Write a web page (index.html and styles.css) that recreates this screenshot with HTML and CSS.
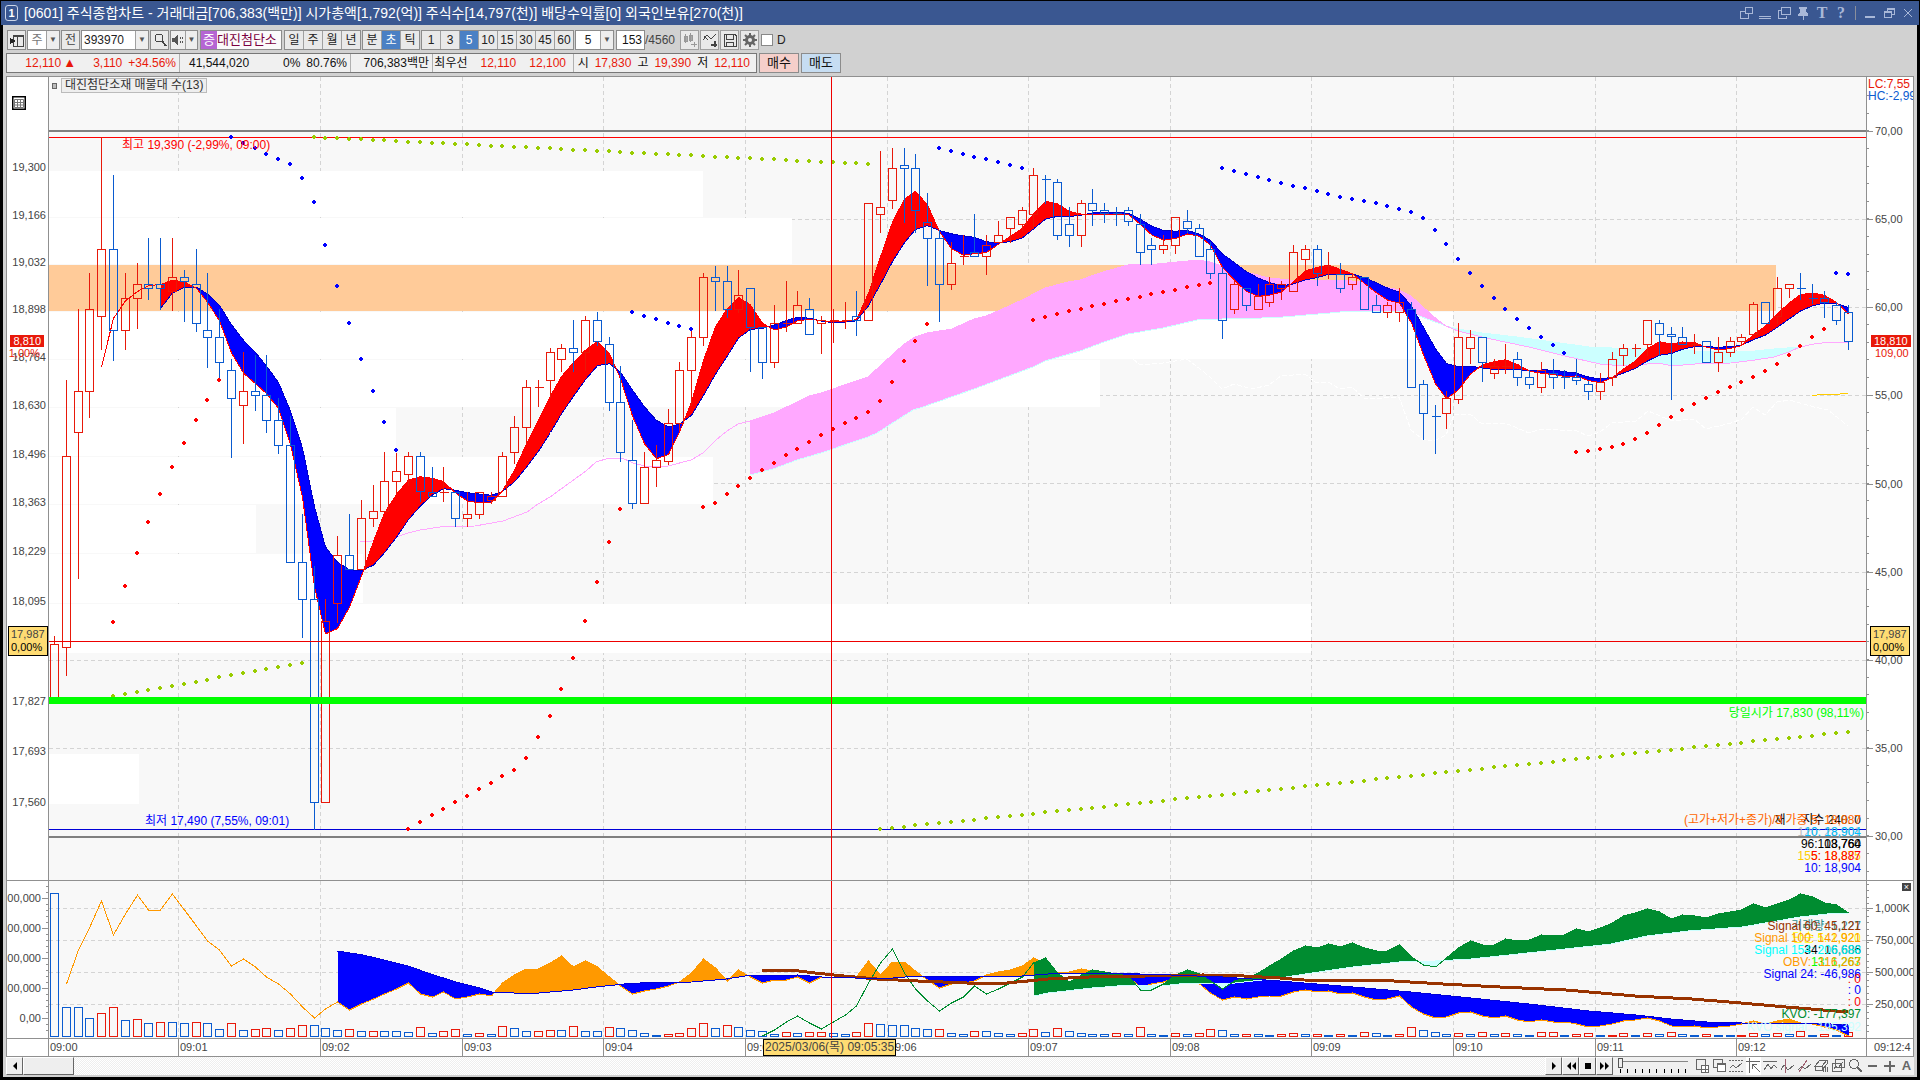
FILE: index.html
```html
<!DOCTYPE html>
<html lang="ko">
<head>
<meta charset="utf-8">
<title>[0601] 주식종합차트</title>
<link rel="stylesheet" href="styles.css">
</head>
<body>
<div class="window">
  <header class="titlebar">
    <span class="win-no">1</span>
    <h1 class="title">[0601] 주식종합차트 - 거래대금[706,383(백만)] 시가총액[1,792(억)] 주식수[14,797(천)] 배당수익률[0] 외국인보유[270(천)]</h1>
    <div class="win-tools">
      <button type="button" aria-label="창 연결"><svg width="14" height="14"><path d="M6 1.500h7v6H6zM6 5.500H1.500v7h8V8" /></svg></button>
      <button type="button" aria-label="접기"><svg width="14" height="14"><path d="M1 10.500h12M1 12.500h12"/></svg></button>
      <button type="button" aria-label="복제"><svg width="14" height="14"><path d="M4.500 1.500h9v7h-9zM4 4.500H1.500v8h8V10"/></svg></button>
      <button type="button" aria-label="고정"><svg width="14" height="14"><path d="M3 1h8v2h-1v3l2 2v2H2V8l2-2V3H3z" fill="currentColor" stroke="none"/><path d="M7 10v4"/></svg></button>
      <button type="button" class="serif">T</button>
      <button type="button" class="serif">?</button>
      <span class="tool-sep"></span>
      <button type="button" aria-label="최소화"><svg width="14" height="14"><path d="M2 10.500h10" stroke-width="2"/></svg></button>
      <button type="button" aria-label="이전 크기"><svg width="14" height="14"><path d="M5 5V2.500h7v6h-2M2 5.500h7v6H2zM2 6.500h7M5 3.500h7"/></svg></button>
      <button type="button" aria-label="닫기"><svg width="14" height="14"><path d="M3 3l8 8M11 3l-8 8"/></svg></button>
    </div>
  </header>

  <div class="client">
    <div class="toolbar">
      <button type="button" class="btn" aria-label="목록 펼치기"><svg width="16" height="16"><path d="M4.500 3.500h10v11h-10zM8.500 3.500v11M4 4.500h10"/><path d="M1 6l6 3-6 3z" fill="#222" stroke="none"/></svg></button>
      <span class="combo w32"><button type="button" class="plain gray">주</button><button type="button" class="drop" aria-label="주기 선택">▼</button></span>
      <button type="button" class="btn">전</button>
      <span class="combo w68"><input type="text" value="393970" aria-label="종목코드"><button type="button" class="drop" aria-label="종목 목록">▼</button></span>
      <button type="button" class="btn" aria-label="종목 찾기"><svg width="16" height="16"><circle cx="7" cy="6" r="4"/><path d="M10 9l4 5" stroke-width="2"/></svg></button>
      <span class="combo w28"><button type="button" class="plain" aria-label="음성"><svg width="14" height="14"><path d="M1 5h2l4-4v12L3 9H1z" fill="#555" stroke="none"/><path d="M9.500 4v2M9.500 8v2M11.500 4v2M11.500 8v2"/></svg></button><button type="button" class="drop" aria-label="음성 설정">▼</button></span>
      <span class="stock"><b>증</b><span>대진첨단소</span></span>
      <div class="seg g2"><button type="button">일</button><button type="button">주</button><button type="button">월</button><button type="button">년</button></div>
      <div class="seg"><button type="button">분</button><button type="button" class="on">초</button><button type="button">틱</button></div>
      <div class="seg"><button type="button">1</button><button type="button">3</button><button type="button" class="on">5</button><button type="button">10</button><button type="button">15</button><button type="button">30</button><button type="button">45</button><button type="button">60</button></div>
      <span class="combo w38"><input type="text" value="5" aria-label="간격" class="mid"><button type="button" class="drop" aria-label="간격 선택">▼</button></span>
      <span class="count"><input type="text" value="153" aria-label="표시 개수">/4560</span>
      <div class="icons">
        <button type="button" class="btn" aria-label="봉 추가"><svg width="16" height="16" class="dim"><path d="M2 4h3v5H2zM7 3h3v5H7zM3.500 2v9M8.500 1v9" fill="#aaa"/><path d="M9 12.500h6M12.500 10v5"/></svg></button>
        <button type="button" class="btn" aria-label="지표 추가"><svg width="16" height="16"><path d="M1 8l4-5 4 4 5-5M2 4l4 4"/><path d="M9 12.500h6M12.500 9v6" stroke-width="2"/></svg></button>
        <button type="button" class="btn" aria-label="저장"><svg width="16" height="16"><path d="M2 2.500h11l1 1v11H2zM4.500 3v4h7V3M4.500 14v-4h7v4"/></svg></button>
        <button type="button" class="btn" aria-label="설정"><svg width="16" height="16" class="gear"><circle cx="8" cy="8" r="3.500" stroke-width="3"/><path d="M8 1v3M8 12v3M1 8h3M12 8h3M3 3l2 2M11 11l2 2M13 3l-2 2M5 11l-2 2" stroke-width="2"/></svg></button>
      </div>
      <label class="check"><input type="checkbox">D</label>
    </div>

    <div class="quote-row">
      <div class="quote">
        <span class="cell c1 up"><span>12,110</span><span class="arrow">▲</span><span>3,110</span><span>+34.56%</span></span>
        <span class="cell c2"><span>41,544,020</span><span class="push">0%</span><span>80.76%</span></span>
        <span class="cell c3">706,383백만</span>
        <span class="cell c4"><span>최우선</span><span class="up">12,110</span><span class="up">12,100</span></span>
        <span class="cell c5"><span>시</span><span class="up">17,830</span><span>고</span><span class="up">19,390</span><span>저</span><span class="up">12,110</span></span>
      </div>
      <button type="button" class="order buy">매수</button>
      <button type="button" class="order sell">매도</button>
    </div>

    <main class="chart">
      <div class="axis axis-left" id="axisL1">
        <svg class="grid-icon" width="14" height="14" viewBox="0 0 14 14"><path d="M.5.500h13v13H.5z" fill="#fff" stroke="#000" stroke-width="2"/><path d="M2.500 3.500h9v8h-9zM2 6.500h10M2 9h10M5.500 3v9M8.500 3v9" fill="none" stroke="#777"/></svg>
      </div>
      <div class="plot" id="plot1">
        <svg id="price" viewBox="49 77 1817 803" preserveAspectRatio="none"></svg>
        <div class="legend"><i></i><span>대진첨단소재 매물대 수(13)</span></div>
      </div>
      <div class="axis axis-right" id="axisR1">
        <svg class="ticks" id="ticksR1" viewBox="1867 77 46 803" preserveAspectRatio="none"></svg>
        <div class="lchc"><span class="up">LC:7,55</span><span class="down">HC:-2,99</span></div>
      </div>

      <div class="axis axis-left sub" id="axisL2">
        <svg class="ticks" id="ticksL2" viewBox="7 881 41 157" preserveAspectRatio="none"></svg>
      </div>
      <div class="plot sub" id="plot2">
        <svg id="volume" viewBox="49 881 1817 157" preserveAspectRatio="none"></svg>
      </div>
      <div class="axis axis-right sub" id="axisR2">
        <svg class="ticks" id="ticksR2" viewBox="1867 881 46 157" preserveAspectRatio="none"></svg>
        <button type="button" class="pane-close" aria-label="지표 닫기">×</button>
      </div>

      <div class="axis time-corner"></div>
      <div class="time-axis" id="timeAxis"></div>
      <div class="axis time-end">09:12:4</div>
    </main>

    <footer class="bottom">
      <button type="button" class="raised" aria-label="왼쪽으로"><svg width="6" height="8"><path d="M5 0v8L1 4z" fill="#000" stroke="none"/></svg></button>
      <button type="button" class="raised thumb" aria-label="스크롤"></button>
      <span class="track"></span>
      <button type="button" class="raised" aria-label="재생"><svg width="8" height="8"><path d="M2 0l4 4-4 4z" fill="#000" stroke="none"/></svg></button>
      <button type="button" class="raised" aria-label="뒤로"><svg width="10" height="8"><path d="M5 0v8L1 4zM10 0v8L6 4z" fill="#000" stroke="none"/></svg></button>
      <button type="button" class="raised" aria-label="정지"><svg width="8" height="8"><path d="M1 1h6v6H1z" fill="#000" stroke="none"/></svg></button>
      <button type="button" class="raised" aria-label="앞으로"><svg width="10" height="8"><path d="M0 0v8l4-4zM5 0v8l4-4z" fill="#000" stroke="none"/></svg></button>
      <span class="speed"><input type="range" min="0" max="9" value="0" aria-label="재생 속도"><svg width="70" height="4"><path d="M2.500 0v4M9.500 0v4M17.500 0v4M24.500 0v4M31.500 0v4M38.500 0v4M46.500 0v4M53.500 0v4M60.500 0v4M67.500 0v4" stroke="#000"/></svg></span>
      <div class="draw-tools">
        <button type="button" aria-label="창 추가"><svg width="15" height="16"><path d="M1.500 1.500h9v10h-9z"/><path d="M6.500 7.500h7v7h-7zM10 7v8M6 11h8" fill="#fff"/></svg></button>
        <button type="button" aria-label="창 복사"><svg width="15" height="16"><path d="M1.500 1.500h9v8h-9z"/><path d="M5.500 5.500h8v8h-8zM5 6.500h9" fill="#fff"/></svg></button>
        <button type="button" aria-label="영역"><svg width="15" height="16"><path d="M0 2.500h14M0 13.500h14" stroke-dasharray="2 1"/><path d="M1 10l3-3 3 3 6-5"/></svg></button>
        <button type="button" class="on" aria-label="십자선"><svg width="15" height="16"><path d="M3.500 0v15M0 3.500h14M6 6l8 8M6.500 6v5M6 6.500h5"/></svg></button>
        <button type="button" aria-label="수평선"><svg width="15" height="16"><path d="M0 3.500h14M1 12l4-6 3 5 3-4 3 3"/></svg></button>
        <button type="button" aria-label="수직선"><svg width="15" height="16"><path d="M1 12l3-5 4 5 6-5"/><path d="M5.500 1v14" stroke="#a06070"/></svg></button>
        <button type="button" aria-label="추세선"><svg width="15" height="16"><path d="M1 12l4-4 3 3 6-5"/><path d="M2 14L10 2" stroke="#a06070"/></svg></button>
        <button type="button" aria-label="모두 지우기"><svg width="15" height="16"><path d="M1 8l5-6h7L8 8zM1 8v4h7V8M8 12l5-6V2"/><path d="M9 14v-3M11.500 14V9M13.500 14V9"/></svg></button>
        <button type="button" aria-label="차트 겹침"><svg width="15" height="16"><path d="M4.500 1.500h9v8h-9zM1.500 5.500h9v8h-9z"/><path d="M3 11l2-3 2 2 5-6"/></svg></button>
        <button type="button" aria-label="확대경"><svg width="15" height="16"><circle cx="6" cy="6" r="4.500"/><path d="M9 9l5 5" stroke-width="2"/></svg></button>
        <button type="button" aria-label="축소"><svg width="15" height="16"><path d="M3 8h9" stroke-width="2"/></svg></button>
        <button type="button" aria-label="확대"><svg width="15" height="16"><path d="M2 8h11M7.500 3v11" stroke-width="2"/></svg></button>
        <button type="button" class="letter">A</button>
      </div>
    </footer>
  </div>
</div>
<script src="chart.js"></script>
</body>
</html>
```
FILE: styles.css
```css
* { box-sizing: border-box; }
body {
  margin: 0;
  min-height: 100vh;
  display: flex;
  background: #000;
  color: #111;
  font: 11px/12px "Liberation Sans", "Noto Sans CJK KR", sans-serif;
}
button, input {
  margin: 0;
  padding: 0;
  border: 0;
  border-radius: 0;
  background: none;
  color: inherit;
  font: inherit;
}
svg { display: block; }
.up { color: #e8190a; }
.down { color: #0a5bd0; }

.window { flex: 1; min-width: 0; display: flex; flex-direction: column; padding: 1px 1px 3px 1px; }
.titlebar {
  height: 24px;
  display: flex;
  align-items: center;
  gap: 6px;
  padding: 0 4px;
  background: #3a5791;
  color: #fff;
}
.win-no {
  width: 13px;
  height: 16px;
  border: 1px solid #cdd6e8;
  border-radius: 3px;
  text-align: center;
  font-weight: bold;
  line-height: 14px;
}
.title { margin: 0; flex: 1; font-size: 14px; line-height: 18px; font-weight: normal; white-space: nowrap; overflow: hidden; }
.win-tools { display: flex; align-items: center; gap: 5px; color: #a9b8d8; }
.win-tools button { width: 14px; height: 16px; }
.win-tools svg, .toolbar svg, .draw-tools svg { fill: none; stroke: currentColor; shape-rendering: crispEdges; }
.serif { font: bold 16px/16px "Liberation Serif", serif; }
.tool-sep { width: 1px; height: 14px; margin: 0 2px; background: #8a8f9c; }

.client {
  flex: 1;
  display: flex;
  flex-direction: column;
  margin: 0 2px;
  padding: 5px 3px 2px 3px;
  background: #d1d1d1;
}

.toolbar { display: flex; height: 20px; gap: 1px; padding-left: 1px; color: #222; font-size: 12px; }
.toolbar button { line-height: 18px; }
.btn, .combo, .seg, .count input, .stock {
  height: 20px;
  border: 1px solid #8c8c8c;
  background: #e9e9e9;
}
.btn { width: 19px; display: grid; place-items: center; color: #444; }
.combo { display: flex; background: #fff; }
.combo input { flex: 1; min-width: 0; padding-left: 2px; }
.combo .mid { text-align: center; padding: 0; }
.plain { flex: 1; display: grid; place-items: center; background: #eee; color: #555; }
.plain.gray { color: #777; background: #fff; }
.drop { width: 13px; border-left: 1px solid #a0a0a0; background: #eee; color: #555; font-size: 8px; }
.w28 { width: 28px; }
.w32 { width: 33px; }
.w38 { width: 39px; }
.w68 { width: 68px; }
.stock { display: flex; width: 82px; margin-left: 1px; line-height: 18px; background: #fafafa; color: #7a0040; overflow: hidden; white-space: nowrap; font-size: 13px; }
.stock b { width: 16px; flex: none; background: #b565d3; color: #fff; font-weight: normal; text-align: center; }
.seg { display: flex; }
.seg button { width: 19px; border-left: 1px solid #a0a0a0; text-align: center; }
.seg button:first-child { border-left: 0; width: 18px; }
.g2 { margin-left: 1px; }
.seg .on { background: #4a80c4; color: #fff; }
.count { width: 63px; margin-left: 1px; line-height: 20px; color: #444; white-space: nowrap; }
.count input { width: 29px; background: #fff; text-align: right; padding-right: 2px; color: #111; }
.icons { display: flex; gap: 1px; }
.icons .btn { border-color: #a0a0a0; }
.dim { color: #999; }
.toolbar .gear { shape-rendering: auto; color: #666; }
.check { display: flex; align-items: center; gap: 4px; margin-left: 1px; }
.check input { appearance: none; width: 12px; height: 12px; border: 1px solid #888; background: #fff; }

.quote-row { display: flex; gap: 2px; height: 22px; align-items: center; margin-top: 2px; }
.quote { display: flex; height: 20px; width: 751px; border: 1px solid #777; background: #f0f0f0; line-height: 18px; font-size: 12px; white-space: nowrap; }
.cell { display: flex; justify-content: flex-end; padding: 0 3px; border-left: 1px solid #b0b0b0; }
.cell:first-child { border-left: 0; }
.c1 { width: 172px; gap: 6px; }
.c1 .arrow { width: 24px; margin-left: -4px; font-size: 13px; }
.c2 { width: 171px; gap: 6px; padding-left: 9px; }
.push { margin-left: auto; }
.c3 { width: 82px; }
.c4 { width: 141px; gap: 13px; padding-right: 7px; }
.c5 { flex: 1; gap: 6px; padding-right: 6px; }
.order { width: 40px; height: 20px; border: 1px solid #8c8c8c; font-size: 13px; line-height: 18px; }
.buy { background: #f5cfca; }
.sell { background: #c6ddf2; }

.chart {
  flex: 1;
  display: grid;
  grid-template-columns: 41px 1fr 47px;
  grid-template-rows: 803fr 158fr 18px;
  margin-top: 2px;
  border: 1px solid #909090;
  background: #fff;
  color: #444;
}
.axis, .plot { position: relative; overflow: hidden; min-width: 0; min-height: 0; }
.plot { border-left: 1px solid #909090; background: #f8f8f8; font-size: 12px; }
.axis-right { border-left: 1px solid #909090; }
.sub { border-top: 1px solid #909090; }
.plot > svg, .ticks { position: absolute; inset: 0; width: 100%; height: 100%; shape-rendering: crispEdges; }
.grid-icon { position: absolute; left: 5px; top: 19px; }
.legend { position: absolute; left: 3px; top: 1px; display: flex; align-items: center; gap: 4px; color: #333; }
.legend i { width: 5px; height: 6px; border: 1px solid #666; background: #bbb; }
.legend span { padding: 0 3px; border: 1px solid #bbb; background: #eee; line-height: 13px; white-space: nowrap; }
.tag { position: absolute; transform: translateY(-50%); white-space: nowrap; }
.axis-left .tag { right: 2px; }
.axis-right .tag { left: 8px; }
.axis .price-now { background: #e8190a; color: #fff; padding: 0 3px 0 3px; }
.axis-left .price-now { right: 4px; }
.axis-right .price-now { left: 4px; }
.axis .cursor { border: 1px solid #000; background: #ffdc73; line-height: 13px; padding: 1px 2px; }
.axis-left .cursor { left: 1px; right: auto; }
.axis-right .cursor { left: 3px; }
.cursor em { display: block; font-style: normal; color: #000; }
.lchc { position: absolute; left: 1px; top: 1px; font-size: 12px; display: grid; white-space: nowrap; }
.pane-close { position: absolute; right: 2px; top: 2px; width: 9px; height: 8px; background: #444; color: #fff; line-height: 7px; font-size: 9px; }

.time-corner, .time-axis, .time-end { border-top: 1px solid #909090; }
.time-axis { position: relative; overflow: hidden; border-left: 1px solid #909090; line-height: 16px; }
.time-axis span { position: absolute; top: 0; height: 100%; padding-left: 1px; border-left: 1px solid #909090; }
.time-axis .first { border-left: 0; }
.time-axis .cursor { border: 1px solid #000; background: #ffdc73; padding: 0 1px; font-size: 12px; line-height: 15px; white-space: nowrap; }
.time-end { border-left: 1px solid #909090; padding-left: 7px; line-height: 16px; }

.bottom { display: flex; height: 18px; align-items: stretch; background: #f0f0f0; }
.raised { width: 17px; display: grid; place-items: center; background: #eee; border: 1px solid; border-color: #fff #666 #666 #fff; }
.thumb { width: 51px; }
.track { flex: 1; background: repeating-conic-gradient(#fff 0 25%, #eee 0 50%) 0 0 / 2px 2px; }
.speed { width: 70px; margin: 0 7px 0 5px; }
.speed input { display: block; width: 70px; height: 12px; appearance: none; background: linear-gradient(#888, #888) 0 4px / 100% 1px no-repeat; }
.speed input::-webkit-slider-thumb { appearance: none; width: 5px; height: 10px; border: 1px solid #555; background: #eee; }
.draw-tools { display: flex; gap: 2px; color: #666; }
.draw-tools button { width: 15px; display: grid; place-items: center; }
.draw-tools .on { background: #fff; }
.draw-tools .letter { font-size: 13px; font-weight: bold; }
```
FILE: chart.js
```js
// Chart coordinates: x of candle i, y straight from the price scale.
const X = i => Math.round(54 + 11.8 * i);
const RED = '#e8190a', BLUE = '#0a5bd0';

// [direction, high, body top, body bottom, low]
const C = `r636,644,700,700 r380,456,647,675 r309,391,432,578 r273,309,391,417 r137,249,316,349 b175,249,330,360 r273,298,330,349 r263,284,298,328 b238,284,288,299 b238,284,288,309
r238,277,291,310 b270,277,281,321 b249,284,323,331 b273,330,337,367 b309,337,362,379 b359,370,398,457 r352,391,405,443 b355,391,395,410 b355,395,420,432 b398,420,445,453
b416,445,562,562 b514,562,599,637 b566,599,802,829 r599,621,802,802 r536,555,603,622 b514,555,569,569 r500,518,569,569 r485,511,518,526 r452,481,511,511 r453,471,481,493
r452,456,474,485 b452,456,491,501 b467,492,496,496 r467,492,492,501 b492,492,518,526 r492,514,518,526 r492,492,514,518 r492,496,500,503 r452,456,496,496 r416,427,452,463
r380,387,427,443 r380,387,387,406 r348,352,380,397 r344,348,359,371 b320,348,352,371 r316,320,352,370 b312,320,341,345 b337,344,402,410 b366,402,452,461 b420,460,503,508
r452,467,503,503 r445,460,467,486 r409,423,461,464 r362,370,423,430 r328,337,370,405 r273,277,337,345 b266,277,281,310 b266,281,309,317 r270,295,309,312 b288,288,327,371
b327,327,362,378 r305,323,362,367 r281,323,323,331 r291,305,323,323 b298,309,334,334 r316,320,323,353 r309,320,320,342 r302,320,320,328 b291,316,320,335 r203,203,320,320
r151,207,214,232 r148,168,200,208 b148,165,168,222 b154,168,210,232 b193,222,238,285 b230,238,284,321 r242,263,284,289 r235,256,256,264 b214,252,256,256 r235,245,256,274
r221,235,242,242 r217,217,228,242 r207,210,224,230 r168,175,214,228 b175,179,179,203 b179,182,235,239 b207,224,235,246 r200,203,235,246 b189,203,210,225 b203,210,213,222
b207,213,213,225 b207,210,221,225 b214,224,252,264 b238,245,249,264 r235,245,249,253 r217,217,245,253 b210,221,228,232 b224,228,256,256 b242,249,273,278 b267,273,320,338
r280,284,309,313 b288,288,305,310 r284,296,309,309 r277,284,302,306 r281,284,288,299 r245,252,291,291 r245,249,259,270 b245,249,273,285 r252,266,266,278 b263,274,288,292
r273,277,284,289 b277,277,309,309 b295,305,312,312 r302,305,312,317 r288,302,312,321 b302,309,387,387 b380,384,413,439 b405,416,416,453 r391,398,413,428 r323,337,399,403
r330,337,348,363 b337,337,362,381 r359,366,373,378 r344,366,366,373 b352,359,377,385 b370,377,384,388 r362,370,387,392 b359,373,377,388 b370,377,377,388 b359,377,380,384
b381,384,391,399 r373,382,391,399 r352,359,377,385 r344,348,355,365 r344,348,348,356 r320,320,344,355 b320,323,334,355 b327,334,336,399 b327,337,344,344 r334,344,344,353
b341,341,362,362 r337,352,362,371 r337,341,352,356 r334,337,341,345 r302,304,334,334 b302,302,323,323 r277,288,316,323 r284,284,288,297 b273,288,288,299 b284,298,298,303
b291,298,302,317 b302,305,320,324 b305,312,341,349`.split(/\s+/).map(s => [s[0], ...s.slice(1).split(',').map(Number)]);

const typical = C.map(([d, h, t, b, l]) => (h + l + (d === 'r' ? t : b)) / 3);
// Linearly weighted moving average of the typical price.
const wma = n => typical.map((_, i) => {
  if (i < n - 1) return null;
  let s = 0;
  for (let k = 0; k < n; k++) s += typical[i - k] * (n - k);
  return s / (n * (n + 1) / 2);
});
const pts = s => s.trim().split(/\s+/).map(p => p.split(',').map(Number));
const line = (p, stroke, extra = '') => `<polyline points="${p.map(q => q.join()).join(' ')}" fill="none" stroke="${stroke}" ${extra}/>`;
const rect = (x, y, w, h, f) => `<rect x="${x}" y="${y}" width="${w}" height="${h}" fill="${f}"/>`;
const at = (knots, x) => {
  for (let k = 1; k < knots.length; k++) {
    const [x0, y0] = knots[k - 1], [x1, y1] = knots[k];
    if (x <= x1) return y0 + (y1 - y0) * (x - x0) / (x1 - x0);
  }
  return knots[knots.length - 1][1];
};
// Area between a and b: colour "above" where a is higher on screen, else "below".
const between = (x, a, b, above, below) => {
  const d = { [above]: '', [below]: '' };
  for (let i = 1; i < x.length; i++) {
    const p = b[i - 1] - a[i - 1], q = b[i] - a[i];
    if (p * q < 0) {
      const t = p / (p - q), xc = x[i - 1] + t * (x[i] - x[i - 1]), yc = a[i - 1] + t * (a[i] - a[i - 1]);
      d[p > 0 ? above : below] += `M${x[i - 1]} ${a[i - 1]}L${xc} ${yc}L${x[i - 1]} ${b[i - 1]}z`;
      d[q > 0 ? above : below] += `M${x[i]} ${a[i]}L${xc} ${yc}L${x[i]} ${b[i]}z`;
    } else {
      d[p + q > 0 ? above : below] += `M${x[i - 1]} ${a[i - 1]}L${x[i]} ${a[i]}L${x[i]} ${b[i]}L${x[i - 1]} ${b[i - 1]}z`;
    }
  }
  return Object.entries(d).map(([c, p]) => `<path d="${p}" fill="${c}"/>`).join('');
};

const minutes = [178, 320, 462, 603, 745, 887, 1028, 1170, 1311, 1453, 1595, 1736];
const grid = (ys, y0, y1) => '<g stroke="#d4d4d4" stroke-dasharray="4 3">' +
  minutes.map(x => `<path d="M${x}.500 ${y0}V${y1}"/>`).join('') +
  ys.map(y => `<path d="M49 ${y}.500H1866"/>`).join('') + '</g>';

// ---- price pane ----
let s = grid([219, 307, 395, 483, 572, 660, 748], 77, 880);
// volume profile: [top, bottom, right]
[[171, 217, 703], [218, 264, 792], [312, 359, 1453], [360, 407, 1100], [408, 456, 396], [457, 504, 713], [505, 553, 256], [554, 603, 363], [604, 653, 1311], [754, 804, 139]]
  .forEach(([a, b, r]) => s += rect(49, a, r - 49, b - a, '#fff'));
s += rect(49, 265, 1727, 46, '#ffcb99');
s += rect(49, 130, 1817, 2, '#808080') + rect(49, 836, 1817, 2, '#808080');
s += rect(49, 137, 1817, 1, '#f00') + rect(49, 829, 1817, 1, '#0000d8');

s += line(pts(`1133,359 1140,365 1163,363 1187,359 1200,369 1210,377 1222,389 1234,384 1252,389 1269,385 1281,376 1305,374 1316,383 1328,382 1340,389 1352,387 1365,399 1399,397 1411,430 1422,439 1434,441 1446,435 1454,415 1470,414 1482,424 1505,423 1529,433 1541,429 1577,431 1588,436 1600,432 1612,423 1636,421 1648,411 1672,421 1694,419 1706,429 1731,423 1742,419 1753,407 1765,415 1777,402 1790,400 1814,407 1828,410 1848,426`), '#fff', 'stroke-dasharray="5 2"');

const spanA = pts(`750,421 774,413 797,402 809,396 821,393 868,377 903,345 915,337 927,333 952,329 974,319 986,316 998,311 1022,300 1045,288 1068,282 1080,280 1103,272 1128,265 1157,264 1198,260 1210,262 1222,266 1250,273 1269,278 1290,280 1328,280 1352,281 1364,282 1399,290 1411,296 1422,306 1434,317 1446,326 1458,331 1482,337 1505,342 1529,347 1565,356 1600,364 1612,365 1636,365 1659,363 1672,366 1695,364 1731,363 1755,360 1774,357 1789,352 1800,347 1814,344 1830,342 1848,342`);
const spanB = pts(`750,475 773,469 797,460 821,453 868,437 877,433 913,410 920,408 974,389 998,380 1033,367 1045,361 1080,351 1104,342 1128,334 1163,328 1197,320 1222,319 1262,318 1283,317 1330,313 1351,311 1399,311 1419,316 1446,326 1458,329 1482,333 1517,337 1553,342 1589,347 1612,348 1656,349 1695,351 1755,351 1774,349 1800,347`);
const cx = [];
for (let x = 750; x <= 1800; x += 2) cx.push(x);
s += between(cx, cx.map(x => at(spanA, x)), cx.map(x => at(spanB, x)), '#ffa8ff', '#ccffff');
s += line(spanB, '#ccffff');
s += line(pts(`360,542 372,541 384,539 396,537 408,533 420,530 440,527 475,526 503,521 527,512 538,504 550,497 561,489 586,471 596,462 609,458 622,458 633,463 645,466 668,466 691,460 703,453 716,440 727,431 738,424`).concat(spanA), '#ffa8ff');
s += line(pts('1812,396 1822,394 1840,394 1848,393'), '#ffcc00');

const candleX = C.map((_, i) => X(i) + 0.5);
const fast = wma(5), slow = wma(10);
s += between(candleX.slice(9), fast.slice(9), slow.slice(9), '#ff0000', '#0000ff');
s += line(slow.map((y, i) => [candleX[i], y]).slice(9), '#0000c8');
s += line(fast.map((y, i) => [candleX[i], y]).slice(4), '#ff0000');

C.forEach(([d, h, t, b, l], i) => {
  const x = X(i) + 0.5, c = d === 'r' ? RED : BLUE;
  s += `<path d="M${x} ${h}V${t}M${x} ${b}V${l + 1}${b === t ? `M${x} ${t}v1` : ''}" stroke="${c}"/>`;
  s += b === t ? `<path d="M${x - 4} ${t}.500h9" stroke="${c}"/>`
    : `<rect x="${x - 4}" y="${t}.500" width="8" height="${b - t}" fill="none" stroke="${c}"/>`;
});

const dots = (from, ys, c) => ys.forEach((y, k) => {
  const x = X(from + k);
  s += rect(x - 1, y - 2, 2, 4, c) + rect(x - 2, y - 1, 4, 2, c);
});
const ramp = (a, b, n) => Array.from({ length: n }, (_, k) => Math.round(a + (b - a) * k / (n - 1)));
dots(15, [137, 143, 148, 154, 159, 164, 178, 202, 245, 286, 323, 359, 391, 422, 450], '#00f');
dots(49, [312, 316, 319, 323, 326, 329], '#00f');
dots(75, [148, 151, 154, 157, 159, 162, 165, 168], '#00f');
dots(99, [168, 171, 174, 177, 180, 183, 186, 188, 191, 194, 197, 199, 201, 203, 206, 209, 212, 218, 230, 244, 259, 273, 286, 298, 309, 319, 328, 337, 345, 353], '#00f');
dots(151, [273, 274], '#00f');
dots(5, [622, 586, 553, 522, 494, 467, 443, 420, 400, 380], '#f00');
dots(30, [829, 822, 815, 809, 802, 796, 789, 783, 776, 770, 758, 737, 716, 689, 658, 621, 582, 542, 509], '#f00');
dots(55, [507, 503, 494, 486, 478, 470, 463, 455, 449, 442, 435, 429, 423, 418, 412, 401, 382, 361, 341, 324], '#f00');
dots(83, [320, 317, 314, 311, 309, 306, 304, 301, 299, 297, 294, 292, 290, 287, 285, 283], '#f00');
dots(129, [452, 451, 449, 447, 444, 439, 433, 425, 417, 410, 404, 398, 392, 387, 382, 377, 371, 364, 355, 346, 337, 329], '#f00');
dots(5, ramp(696, 663, 17), '#99cc00');
dots(22, ramp(137, 164, 48), '#99cc00');
dots(70, ramp(829, 732, 83), '#99cc00');

s += rect(49, 641, 1817, 1, '#e00') + rect(49, 697, 1817, 7, '#0f0') + rect(831, 77, 1, 803, '#e00');
document.getElementById('price').innerHTML = s;

// ---- volume / OBV / KVO pane ----
s = grid([908, 940, 972, 1004], 881, 1038);
[-143,-29,-29,-18,23,29,-16,17,-13,14,-14,-13,14,-13,-7,13,-6,7,8,-6,8,11,-11,-8,-6,7,-5,5,-5,-5,-4,9,-3,5,7,-2,3,-2,10,-8,-5,5,6,-6,10,-5,-5,9,-8,-6,
-3,-1,2,3,8,13,-8,11,-9,-6,-5,-2,4,-3,4,4,-3,-2,4,13,-12,-11,-11,-8,-7,7,-3,-2,5,-5,-3,-2,3,7,-4,8,-5,-3,-2,-2,3,-2,9,-2,-1,3,-2,3,7,-6,
-2,2,-2,-1,2,3,-2,2,-1,2,-1,4,-3,-1,2,9,-6,-4,-2,3,-2,4,-2,3,-2,-1,4,4,-1,2,3,-1,1,3,-1,3,-2,4,-2,-1,2,-1,-1,1,3,-2,3,-2,5,-1,2,-1,4]
  .forEach((v, i) => s += `<rect x="${X(i) - 3.500}" y="${1036.500 - Math.abs(v)}" width="8" height="${Math.abs(v)}" fill="none" stroke="${v > 0 ? RED : BLUE}"/>`);

const obv = [984,950,928,901,935,914,895,910,910,894,910,926,941,950,966,959,967,977,984,994,1007,1018,1009,1002,1010,1004,999,994,989,983,994,997,992,999,997,994,996,983,975,969,969,963,956,967,961,967,977,986,994,
991,989,986,982,973,959,968,981,970,977,983,980,980,977,983,977,977,978,977,961,975,962,962,971,980,988,984,983,981,975,972,970,966,958,964,973,972,969,971,973,974,977,987,984,982,978,980,984,993,1000,997,999,997,996,
996,992,990,992,991,994,993,997,1000,999,996,1007,1014,1018,1017,1013,1012,1016,1018,1016,1020,1022,1020,1022,1022,1024,1027,1026,1024,1021,1020,1018,1021,1026,1027,1026,1028,1027,1026,1024,1021,1024,1021,1019,1023,1024,1027,1030,1036];
const obvSig = pts(`337,951 363,955 384,960 408,966 431,974 456,982 480,988 492,992 514,993 539,993 573,990 596,987 624,984 640,983 692,982 726,979 745,976 798,975 822,977 856,978 893,978 918,976 1022,976 1048,974 1109,973 1171,975 1223,977 1280,981 1353,987 1411,992 1471,998 1529,1004 1589,1011 1636,1015 1671,1019 1707,1022 1742,1023 1813,1023 1848,1025`);
const ox = candleX.slice(24);
s += between(ox, obv.slice(23), ox.map(x => at(obvSig, x)), '#ff9900', '#0000ff');
s += line(obv.map((y, i) => [candleX[i + 1], y]), '#ff9900');

const kvo = [1036,1030,1022,1016,1023,1029,1022,1015,1006,983,963,949,973,989,1001,1011,1003,997,986,994,989,983,977,963,958,973,982,975,970,972,974,976,990,990,984,975,970,974,981,989,981,978,973,966,
959,951,946,948,944,947,943,948,951,951,945,957,965,967,958,948,941,945,945,939,941,940,935,936,935,929,932,928,923,916,913,909,912,919,915,916,918,914,912,910,904,908,904,900,894,897,903,905,913];
const kvoSig = pts(`1034,996 1048,993 1092,988 1130,985 1170,985 1189,983 1235,983 1280,978 1305,974 1353,967 1399,962 1435,961 1471,959 1518,954 1565,949 1611,944 1647,936 1688,931 1742,927 1800,917 1827,914 1848,913`);
const kx = candleX.slice(83);
s += between(kx, kvo.slice(23), kx.map(x => at(kvoSig, x)), '#008c30', '#ccffff');
s += line(kvoSig, '#ccffff');
s += line(kvo.map((y, i) => [candleX[i + 60], y]), '#008c30');
s += line(pts(`762,970 791,970 815,973 844,976 877,979 918,981 967,983 1007,983 1048,979 1089,977 1203,975 1244,976 1280,978 1304,980 1394,981 1443,984 1500,987 1566,990 1635,996 1692,999 1741,1003 1786,1007 1848,1012`), '#993300', 'stroke-width="3"');
s += line(obvSig, '#0000d8');
s += rect(831, 881, 1, 157, '#e00');
document.getElementById('volume').innerHTML = s;

// ---- axis ticks and labels ----
const add = (id, text, y, box, cls = '', style = '') => {
  const e = document.createElement('span');
  e.className = 'tag ' + cls;
  e.innerHTML = text;
  e.style.cssText = `top:${(y - box[0]) / box[1] * 100}%;${style}`;
  document.getElementById(id).append(e);
};
const P1 = [77, 803], P2 = [881, 157];
['19,300', 167, '19,166', 215, '19,032', 262, '18,898', 309, '18,764', 357, '18,630', 405, '18,496', 454, '18,363', 502, '18,229', 551, '18,095', 601, '17,827', 701, '17,693', 751, '17,560', 802]
  .forEach((v, k, a) => k % 2 || add('axisL1', v, a[k + 1], P1));
let t = '';
for (let k = 0; k <= 8; k++) {
  const y = Math.round(131 + 88.125 * k);
  add('axisR1', 70 - 5 * k + ',00', y, P1);
  t += `<path d="M1867 ${y}.500h6" stroke="#909090"/>`;
}
for (let y = 95; y < 878; y += 17.625) t += `<path d="M1867 ${Math.round(y)}.500h2" stroke="#909090"/>`;
document.getElementById('ticksR1').innerHTML = t;
['axisL1', 'axisR1'].forEach((id, k) => {
  add(id, k ? '18,810' : '8,810', 341, P1, 'price-now');
  add(id, k ? '109,00' : '1,00%', 353, P1, 'up', k ? '' : 'right:8px');
  add(id, '17,987<em>0,00%</em>', 641, P1, 'cursor');
});

t = '';
[898, 928, 958, 988, 1018].forEach((y, k) => {
  add('axisL2', k < 4 ? '00,000' : '0,00', y, P2, '', 'right:7px');
  t += `<path d="M42 ${y}.500h6" stroke="#909090"/>`;
});
for (let y = 886; y < 1036; y += 6) t += `<path d="M46 ${y}.500h2" stroke="#909090"/>`;
document.getElementById('ticksL2').innerHTML = t;
t = '';
['1,000K', '750,000', '500,000', '250,000'].forEach((v, k) => {
  add('axisR2', v, 908 + 32 * k, P2);
  t += `<path d="M1867 ${908 + 32 * k}.500h6" stroke="#909090"/>`;
});
for (let y = 884; y < 1038; y += 6.4) t += `<path d="M1867 ${Math.round(y)}.500h2" stroke="#909090"/>`;
document.getElementById('ticksR2').innerHTML = t;

const pct = x => (x - 49) / 1817 * 100;
add('plot1', '최고 19,390 (-2,99%, 09:00)', 145, P1, '', `left:${pct(122)}%;color:#f00`);
add('plot1', '최저 17,490 (7,55%, 09:01)', 821, P1, '', `left:${pct(145)}%;color:#00f`);
add('plot1', '당일시가 17,830 (98,11%)', 713, P1, '', 'right:2px;color:#0f0');
const right = (id, text, y, box, color, r = 5) => add(id, text, y, box, '', `right:${r}px;color:${color}`);
right('plot1', '재 &nbsp; &nbsp; 지수 240: 0', 820, P1, '#000');
right('plot1', '(고가+저가+종가)/3 가중 5: 18,887', 820, P1, '#ff6600');
right('plot1', '120: 28,901', 832, P1, '#bbb');
right('plot1', '10: 18,904', 832, P1, '#00bfff');
right('plot1', '96:103,764', 844, P1, '#000');
right('plot1', '18,760', 844, P1, '#000');
right('plot1', '155: 18,875', 856, P1, '#ffcc00');
right('plot1', '5: 18,887', 856, P1, '#f00');
right('plot1', '10: 18,904', 868, P1, '#00f');
right('plot2', '거래량: 1,227', 926, P2, '#2f8f8f');
right('plot2', 'Signal 60: 45,121', 926, P2, '#993300');
right('plot2', '단순 5: 1,920', 938, P2, '#ff0');
right('plot2', 'Signal 100: 142,921', 938, P2, '#ff9900');
right('plot2', '34: 16,686', 950, P2, '#000');
right('plot2', 'Signal 154: 206,688', 950, P2, '#0ff');
right('plot2', '13: 1,267', 962, P2, '#0f0');
right('plot2', 'OBV: -116,263', 962, P2, '#ff9900');
right('plot2', 'Signal 24: -46,986', 974, P2, '#00f');
right('plot2', ': 0', 979, P2, '#f00');
right('plot2', ': 0', 990, P2, '#00f');
right('plot2', ': 0', 1002, P2, '#f00');
right('plot2', 'KVO: -177,397', 1014, P2, '#008c30');
right('plot2', 'KVO signal: -195,392', 1027, P2, '#ccffff');

document.getElementById('timeAxis').innerHTML = [49, ...minutes].map((x, k) =>
  `<span class="${k ? '' : 'first'}" style="left:${pct(x)}%">09:${String(k).padStart(2, '0')}</span>`).join('') +
  `<span class="cursor" style="left:${pct(763)}%">2025/03/06(목) 09:05:35</span>`;
```
